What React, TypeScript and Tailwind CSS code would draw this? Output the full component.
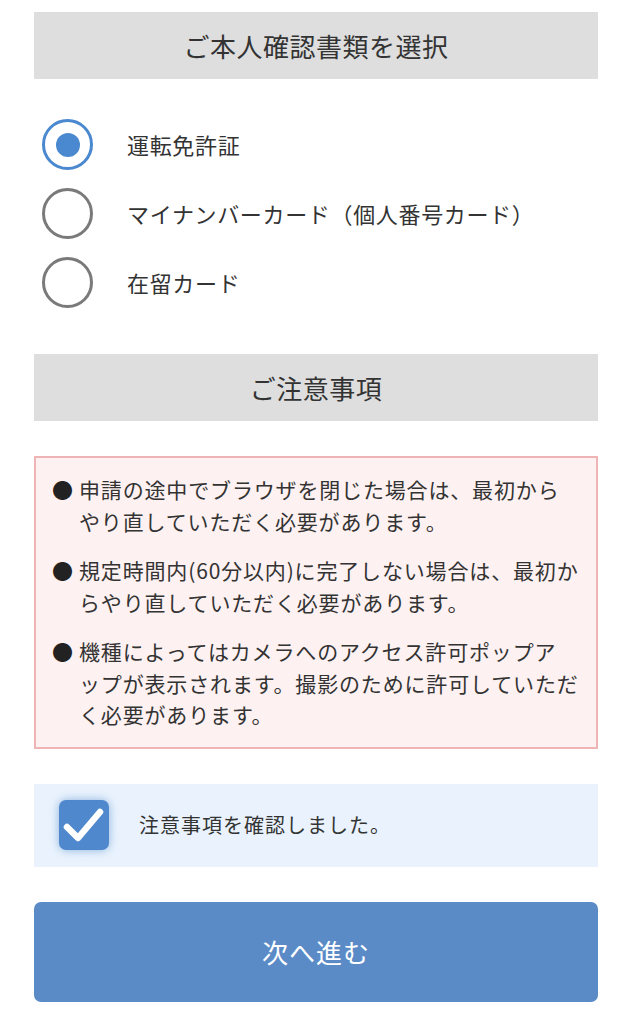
import React, { useState } from "react";

const options = ["運転免許証", "マイナンバーカード（個人番号カード）", "在留カード"];

// line breaks kept as in the screen design
const notes = [
  ["申請の途中でブラウザを閉じた場合は、最初から", "やり直していただく必要があります。"],
  ["規定時間内(60分以内)に完了しない場合は、最初か", "らやり直していただく必要があります。"],
  [
    "機種によってはカメラへのアクセス許可ポップア",
    "ップが表示されます。撮影のために許可していただ",
    "く必要があります。",
  ],
];

function SectionTitle({ children }: { children: React.ReactNode }) {
  return (
    <div className="h-[67px] bg-[#dedede] flex items-center justify-center text-[26px] text-[#333] tracking-[0.02em]">
      {children}
    </div>
  );
}

export default function App() {
  const [selected, setSelected] = useState(0);
  const [checked, setChecked] = useState(true);

  return (
    <div
      className="w-[632px] min-h-[1024px] bg-white px-[34px] pt-[12px]"
      style={{ fontFamily: '"Noto Sans CJK JP", "Noto Sans", sans-serif' }}
    >
      <SectionTitle>ご本人確認書類を選択</SectionTitle>

      {/* document type radios */}
      <div className="flex flex-col gap-[18px] pt-[40px] pb-[46px] pl-[8px]">
        {options.map((label, i) => (
          <button
            key={label}
            onClick={() => setSelected(i)}
            className="flex items-center gap-[34px] text-left"
          >
            <span
              className={
                "w-[51px] h-[51px] rounded-full border-[3px] flex items-center justify-center " +
                (selected === i ? "border-[#4a89cf]" : "border-[#7a7a7a]")
              }
            >
              {selected === i && <span className="w-[24px] h-[24px] rounded-full bg-[#4a89cf]" />}
            </span>
            <span className="text-[22px] text-[#333] tracking-[0.03em]">{label}</span>
          </button>
        ))}
      </div>

      <SectionTitle>ご注意事項</SectionTitle>

      {/* notes */}
      <div className="mt-[35px] border-2 border-[#efb4b4] bg-[#fdf1f1] pl-[16px] pr-[8px] pt-[16px] pb-[16px] flex flex-col gap-[18px]">
        {notes.map((lines) => (
          <div key={lines[0]} className="flex text-[21px] leading-[31.5px] tracking-[0.04em] text-[#333]">
            <span className="w-[27px] shrink-0 text-[#222] tracking-normal">●</span>
            <span className="whitespace-nowrap">
              {lines.map((l, j) => (
                <React.Fragment key={j}>
                  {j > 0 && <br />}
                  {l}
                </React.Fragment>
              ))}
            </span>
          </div>
        ))}
      </div>

      {/* confirm checkbox */}
      <button
        onClick={() => setChecked(!checked)}
        className="mt-[35px] w-full h-[83px] bg-[#eaf3fd] flex items-center pl-[25px] gap-[30px] text-left"
      >
        <span
          className={
            "w-[50px] h-[50px] rounded-[7px] flex items-center justify-center " +
            (checked ? "bg-[#4f88cc] shadow-[0_0_10px_rgba(79,136,204,0.6)]" : "bg-white border-2 border-[#999]")
          }
        >
          {checked && (
            <svg width="42" height="36" viewBox="0 0 42 36" fill="none">
              <path d="M4 20 L15 31 L37 5" stroke="white" strokeWidth="6.5" strokeLinecap="round" strokeLinejoin="round" />
            </svg>
          )}
        </span>
        <span className="text-[20px] text-[#333] tracking-[0.05em]">注意事項を確認しました。</span>
      </button>

      <button className="mt-[35px] w-full h-[100px] rounded-[7px] bg-[#5a8bc7] text-white text-[26px] tracking-[0.04em]">
        次へ進む
      </button>
    </div>
  );
}
